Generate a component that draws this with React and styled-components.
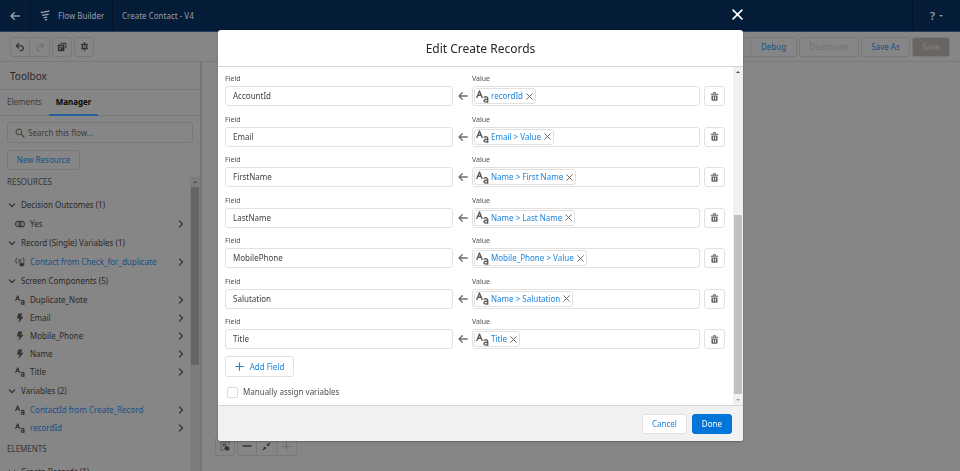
import React from "react";
import styled, { createGlobalStyle, css } from "styled-components";

const Global = createGlobalStyle`
  *, *::before, *::after { box-sizing: border-box; }
  html, body, #root { height: 100%; margin: 0; }
  body {
    overflow: hidden;
    font: 8px/12px "Noto Sans", "Open Sans", sans-serif;
    color: #2b2826;
    background: #868686;
  }
  button, input { font: inherit; color: inherit; margin: 0; padding: 0; }
  button { cursor: pointer; }
  h1, h2, h3, p, ul { margin: 0; padding: 0; font-weight: 400; }
  a { color: inherit; text-decoration: none; }
`;

const line = "#797979";
const dimBlue = "#175087";

const Page = styled.div`
  height: 100vh;
  display: flex;
  flex-direction: column;
  overflow: hidden;
`;

const TopBar = styled.header`
  display: flex;
  flex: none;
  height: 32px;
  background: #051c39;
  border-bottom: 1px solid #27405f;
  color: #979ea6;
`;

const topCell = css`
  display: flex;
  align-items: center;
  border: 0 solid #031329;
  border-right-width: 1px;
`;

const BackButton = styled.button`
  ${topCell}
  width: 31px;
  justify-content: center;
  background: none;
`;

const Brand = styled.div`
  ${topCell}
  width: 82px;
  padding-left: 9px;
  gap: 7px;
`;

const FlowName = styled.h1`
  flex: 1;
  align-self: center;
  padding-left: 9px;
  font-size: 8px;
  line-height: 12px;
`;

const HelpButton = styled.button`
  ${topCell}
  width: 48px;
  justify-content: center;
  gap: 4px;
  border-width: 0 0 0 1px;
  background: none;
  font-size: 11px;
  font-weight: 600;
`;

const Toolbar = styled.div`
  display: flex;
  flex: none;
  align-items: center;
  gap: 2px;
  height: 30px;
  padding: 0 10px;
  border-bottom: 1px solid ${line};
`;

const Spacer = styled.div`
  flex: 1;
`;

const ButtonGroup = styled.div`
  display: flex;
  button + button { border-left: 0; border-radius: 0 3px 3px 0; }
  button:not(:last-child) { border-top-right-radius: 0; border-bottom-right-radius: 0; }
  button:nth-child(2):not(:last-child) { border-radius: 0; }
`;

const DimButton = styled.button`
  display: flex;
  align-items: center;
  justify-content: center;
  height: 20px;
  width: ${(p) => p.$w || 20}px;
  border: 1px solid ${line};
  border-radius: 3px;
  background: ${(p) => (p.$filled ? "#686563" : "transparent")};
  color: ${(p) => p.$color || "#363433"};
`;

const Workspace = styled.main`
  display: flex;
  flex: 1;
  min-height: 0;
`;

const Sidebar = styled.aside`
  display: flex;
  flex: none;
  flex-direction: column;
  width: 201px;
  border-right: 1px solid #707070;
  box-shadow: 1px 0 1px #7a7a7a;
`;

const PanelTitle = styled.h2`
  flex: none;
  height: 28px;
  padding-left: 10px;
  border-bottom: 1px solid ${line};
  font-size: 10px;
  line-height: 29px;
`;

const Tabs = styled.div`
  display: flex;
  flex: none;
  height: 26px;
  border-bottom: 1px solid ${line};
`;

const Tab = styled.button`
  height: 26px;
  padding: 0 7px;
  border: 0;
  border-bottom: 2px solid ${(p) => (p.$active ? "#265f9f" : "transparent")};
  background: none;
  color: ${(p) => (p.$active ? "#080707" : "#3c3a39")};
  font-weight: ${(p) => (p.$active ? 700 : 400)};
`;

const SearchBox = styled.label`
  display: flex;
  flex: none;
  align-items: center;
  gap: 3px;
  height: 21px;
  margin: 6px 7px 0;
  padding: 0 7px;
  border: 1px solid ${line};
  border-radius: 3px;
  color: #4c4a49;
  input {
    flex: 1;
    min-width: 0;
    border: 0;
    outline: 0;
    background: none;
  }
  input::placeholder { color: #3f3d3c; opacity: 1; }
`;

const NewResource = styled(DimButton)`
  flex: none;
  margin: 7px 7px 0;
`;

const ResourceArea = styled.div`
  display: flex;
  flex: 1;
  min-height: 0;
`;

const ResourceList = styled.div`
  flex: 1;
  overflow: hidden;
`;

const Section = styled.h3`
  height: 25px;
  padding-left: 7px;
  font-size: 8px;
  line-height: 24px;
  color: #363433;
`;

const GroupToggle = styled.button`
  display: flex;
  align-items: center;
  gap: 5px;
  width: 100%;
  height: 20px;
  padding-left: 8px;
  border: 0;
  background: none;
`;

const Items = styled.ul`
  list-style: none;
`;

const Item = styled.li`
  a {
    display: grid;
    grid-template-columns: 10px 1fr 6px;
    align-items: center;
    gap: 5px;
    height: 18px;
    padding: 0 6px 0 15px;
    color: ${(p) => (p.$link ? dimBlue : "#2b2826")};
  }
  svg { color: #363433; }
`;

const Track = styled.div`
  display: flex;
  flex: none;
  flex-direction: column;
  align-items: center;
  width: 10px;
  background: ${(p) => (p.$light ? "#f1f1f1" : "#7d7d7d")};
  margin-top: ${(p) => (p.$light ? 0 : 7)}px;
`;

const Arrow = styled.i`
  width: 0;
  height: 0;
  flex: none;
  margin: ${(p) => (p.$down ? "5px 0 4px" : "4px 0 4px")};
  border: 2px solid transparent;
  border-${(p) => (p.$down ? "bottom" : "top")}-width: 0;
  border-${(p) => (p.$down ? "top" : "bottom")}: 2px solid ${(p) => p.$color};
`;

const SideThumb = styled.div`
  width: 8px;
  height: 178px;
  background: #656565;
`;

const Canvas = styled.section`
  display: flex;
  flex: 1;
  align-items: flex-end;
  gap: 2px;
  padding: 0 0 15px 14px;
`;

const Scrim = styled.div`
  position: fixed;
  inset: 0;
  padding: 30px 217px 30px 218px;
`;

const CloseButton = styled.button`
  position: absolute;
  top: 9px;
  right: 217px;
  display: flex;
  border: 0;
  background: none;
  color: #fff;
`;

const Dialog = styled.section`
  display: flex;
  flex-direction: column;
  height: 100%;
  overflow: hidden;
  border-radius: 3px;
  background: #fff;
  box-shadow: 0 1px 2px rgba(0, 0, 0, 0.25);
`;

const DialogTitle = styled.h2`
  flex: none;
  height: 37px;
  border-bottom: 1px solid #d6d5d5;
  font-size: 12px;
  line-height: 37px;
  text-align: center;
`;

const DialogBody = styled.div`
  display: flex;
  flex: 1;
  min-height: 0;
`;

const Form = styled.form`
  display: flex;
  flex: 1;
  flex-direction: column;
  padding: 7px 8px 7px 7px;
`;

const Assignments = styled.div`
  display: flex;
  flex: 1;
  flex-direction: column;
  justify-content: space-between;
`;

const Assignment = styled.div`
  display: grid;
  grid-template-columns: minmax(0, 1fr) 19px minmax(0, 1fr) 25px;
  align-items: end;
  color: #3e3e3c;
`;

const FieldLabel = styled.label`
  display: block;
  height: 12px;
  font-size: 7px;
  line-height: 10px;
  color: #514f4d;
`;

const frame = css`
  width: 100%;
  height: 20px;
  border: 1px solid #e3e1e0;
  border-radius: 3px;
  background: #fff;
`;

const TextField = styled.input`
  ${frame}
  padding: 0 7px 1px;
`;

const MapArrow = styled.div`
  display: flex;
  align-items: center;
  justify-content: center;
  height: 20px;
  color: #706e6b;
`;

const ValueBox = styled.div`
  ${frame}
  display: flex;
  align-items: center;
  padding-left: 1px;
  input {
    flex: 1;
    min-width: 0;
    border: 0;
    outline: 0;
    background: none;
  }
`;

const Pill = styled.span`
  display: flex;
  align-items: center;
  gap: 2px;
  height: 16px;
  padding: 0 2px 0 1px;
  border: 1px solid #e3e1e0;
  border-radius: 3px;
  color: #1b84dc;
  white-space: nowrap;
  svg { color: #5f5d5a; }
  button {
    display: flex;
    margin-left: 1px;
    border: 0;
    background: none;
  }
`;

const DeleteButton = styled.button`
  ${frame}
  width: 21px;
  margin-left: 4px;
  display: flex;
  align-items: center;
  justify-content: center;
  color: #666462;
`;

const AddField = styled.button`
  ${frame}
  display: flex;
  align-items: center;
  justify-content: center;
  gap: 6px;
  width: 69px;
  height: 21px;
  margin-top: 7px;
  color: #1b84dc;
`;

const Check = styled.label`
  display: flex;
  align-items: center;
  gap: 5px;
  margin: 9px 0 0 2px;
  color: #514f4d;
  input {
    appearance: none;
    width: 11px;
    height: 11px;
    border: 1px solid #dddbda;
    border-radius: 2px;
    background: #fff;
  }
`;

const BodyGap = styled.div`
  flex: 1;
`;

const BodyThumb = styled.div`
  width: 8px;
  height: 179px;
  background: #c1c1c1;
`;

const DialogFooter = styled.footer`
  display: flex;
  flex: none;
  align-items: center;
  justify-content: flex-end;
  gap: 5px;
  height: 36px;
  padding-right: 11px;
  border-top: 1px solid #d6d5d5;
  background: #f2f1f1;
`;

const FooterButton = styled.button`
  height: 20px;
  padding: 0 9px;
  border: 1px solid ${(p) => (p.$primary ? "#0176d8" : "#e3e1e0")};
  border-radius: 3px;
  background: ${(p) => (p.$primary ? "#0176d8" : "#fff")};
  color: ${(p) => (p.$primary ? "#fff" : "#1b84dc")};
`;

function Svg({ w = 10, h = w, box = "0 0 10 10", sw = 1, fill = "none", children }) {
  return (
    <svg
      width={w}
      height={h}
      viewBox={box}
      fill={fill}
      stroke={fill === "none" ? "currentColor" : "none"}
      strokeWidth={sw}
      strokeLinecap="round"
      strokeLinejoin="round"
      aria-hidden="true"
    >
      {children}
    </svg>
  );
}

const LeftArrow = ({ sw = 1.3 }) => (
  <Svg sw={sw}><path d="M9.2 5H1M4.3 1.7 1 5l3.3 3.3" /></Svg>
);
const Cross = ({ size = 7, sw = 1.3 }) => (
  <Svg w={size} sw={sw}><path d="m1 1 8 8M9 1 1 9" /></Svg>
);
const FlowLogo = () => (
  <Svg w={11} h={11} box="0 0 11 11" sw={1.3}>
    <path d="M1.2 2.2c1.6 1 3.4-.9 5-.7 1 .2 1.700.1 2.800-.6M2.600 5.100c1.300.700 2.500-.700 3.700-.600.700.100 1.200.100 1.900-.400M4 7.600c.9.500 1.700-.500 2.800-.500M5.300 9.900c.5.200.9-.100 1.300-.300" />
  </Svg>
);
const Undo = () => (
  <Svg sw={1.3}><path d="M3.6 1.5 1.3 3.8l2.3 2.3M1.5 3.8h4.3a2.3 2.3 0 0 1 0 4.8H5" /></Svg>
);
const Redo = () => (
  <Svg sw={1.3}><path d="m6.4 1.5 2.3 2.3-2.3 2.3M8.5 3.8H4.2a2.3 2.3 0 0 0 0 4.8H5" /></Svg>
);
const Copy = () => (
  <Svg fill="currentColor">
    <path d="M3.8.7h4.7c.5 0 .8.3.8.8v4.8h-1V1.7H3z" />
    <path fillRule="evenodd" d="M1.6 2.6h5c.5 0 .8.3.8.8v5c0 .5-.3.8-.8.8h-5c-.5 0-.8-.3-.8-.8v-5c0-.5.3-.8.8-.8zm.6 1.6v1h3.7v-1zm0 2v1.2H4V6.2z" />
  </Svg>
);
const Gear = () => (
  <Svg w={9} box="0 0 10 10" fill="currentColor">
    <path fillRule="evenodd" d="M4.3.4h1.4l.3 1.3.9.5 1.3-.4.8 1.3-1 1v1.8l1 1L8.2 8.2l-1.3-.4-.9.5-.3 1.3H4.3L4 8.3l-.9-.5-1.3.4L1 6.9l1-1V4.1l-1-1 .8-1.3 1.3.4.9-.5zM5 3.2a1.8 1.8 0 1 0 0 3.6 1.8 1.8 0 0 0 0-3.6zm0 1a.8.8 0 1 1 0 1.6.8.8 0 0 1 0-1.6z" />
  </Svg>
);
const Magnifier = () => (
  <Svg sw={1.2}><circle cx="3.9" cy="3.9" r="2.8" /><path d="m6 6 3 3" /></Svg>
);
const Chevron = ({ right }) =>
  right ? (
    <Svg w={6} h={8} box="0 0 6 8" sw={1.3}><path d="m1.4.9 3.1 3.1-3.1 3.1" /></Svg>
  ) : (
    <Svg w={8} h={6} box="0 0 8 6" sw={1.1}><path d="m1.3 1.9 2.7 2.7 2.7-2.7" /></Svg>
  );
const Bolt = () => (
  <Svg fill="currentColor"><path d="M3.4.5h4L6 3.7h2.7L3.4 9.7l1-4.2H1.8z" /></Svg>
);
const Outcomes = () => (
  <Svg sw={1.1}>
    <circle cx="3.4" cy="5" r="2.8" />
    <circle cx="6.6" cy="5" r="2.8" />
  </Svg>
);
const RecordVar = () => (
  <Svg sw={0.9}>
    <path d="M1.5 1.2C.5 3 .5 4.5 1.5 6.2M8.3 1.2c1 1.6 1 2.8.5 3.8M3.3 2.2 6 5.2M6.2 2.2 3.3 5.6" />
    <ellipse cx="6.8" cy="7" rx="1.9" ry=".7" fill="currentColor" />
    <path d="M4.9 7v1.2c0 1 3.8 1 3.8 0V7" fill="currentColor" />
  </Svg>
);
const TextIcon = ({ w = 10 }) => (
  <Svg w={w} box="0 0 12 12" sw={1.3}>
    <path d="M.8 6.9 3.2.9l2.4 6M1.6 4.9h3.2" />
    <path d="M7.6 6.6c1.4-.7 3.2-.4 3.2 1v3.7M10.8 8.6c-1.9-.2-3.4.2-3.4 1.4 0 1.6 2.8 1.5 3.4-.1" />
  </Svg>
);
const Trash = () => (
  <Svg w={9} fill="currentColor">
    <path fillRule="evenodd" d="M.8 2h2.4V1.3c0-.6.4-1 1-1h1.6c.6 0 1 .4 1 1V2h2.4v1.1H.8zm3.4 0h1.6v-.7H4.2zM1.6 3.8h6.8v4.9c0 .6-.4 1-1 1H2.6c-.6 0-1-.4-1-1zm1.8 1.1v3.4h.9V4.9zm2.3 0v3.4h.9V4.9z" />
  </Svg>
);
const Plus = ({ size = 9, sw = 1.3 }) => (
  <Svg w={size} sw={sw}><path d="M5 .8v8.4M.8 5h8.4" /></Svg>
);
const Minus = () => <Svg sw={1.3}><path d="M1 5h8" /></Svg>;
const Fit = () => (
  <Svg w={9} fill="currentColor">
    <path d="M5.6 4.4V1.3l1.1 1.1L8.6.5l.9.9-1.9 1.9 1.1 1.1zM4.4 5.6v3.1L3.3 7.6 1.4 9.5l-.9-.9 1.9-1.9-1.1-1.1z" />
  </Svg>
);
const SelectIcon = () => (
  <Svg fill="currentColor">
    <path d="M.5.5h1v1h-1zM2.5.5h1v1h-1zM4.5.5h1v1h-1zM6.5.5h1v1h-1zM8.5.5h1v1h-1zM.5 2.5h1v1h-1zM.5 4.5h1v1h-1zM.5 6.5h1v1h-1zM.5 8.5h1v1h-1zM2.5 8.5h1v1h-1zM8.5 2.5h1v1h-1zM2.8 2.8h3.7v.9H2.8zM2.8 4.5h1v1h-1z" />
    <path d="M5 4.2c.6 0 .8.4.8.8l3 .7c.6.2.8.5.7 1l-.5 2.8H5.6L4 7.6c.2-.6.7-.6 1-.3L4.5 5c0-.4.1-.7.5-.8z" />
  </Svg>
);

const icons = { outcome: Outcomes, record: RecordVar, text: TextIcon, bolt: Bolt };

const groups = [
  { title: "Decision Outcomes (1)", items: [["outcome", "Yes"]] },
  { title: "Record (Single) Variables (1)", items: [["record", "Contact from Check_for_duplicate", true]] },
  {
    title: "Screen Components (5)",
    items: [["text", "Duplicate_Note"], ["bolt", "Email"], ["bolt", "Mobile_Phone"], ["bolt", "Name"], ["text", "Title"]],
  },
  { title: "Variables (2)", items: [["text", "ContactId from Create_Record", true], ["text", "recordId", true]] },
];

const assignments = [
  ["AccountId", "recordId"],
  ["Email", "Email > Value"],
  ["FirstName", "Name > First Name"],
  ["LastName", "Name > Last Name"],
  ["MobilePhone", "Mobile_Phone > Value"],
  ["Salutation", "Name > Salutation"],
  ["Title", "Title"],
];

function ResourceGroup({ title, items }) {
  return (
    <>
      <GroupToggle><Chevron />{title}</GroupToggle>
      <Items>
        {items.map(([icon, name, link]) => {
          const Icon = icons[icon];
          return (
            <Item key={name} $link={link}>
              <a href="#resource"><Icon /><span>{name}</span><Chevron right /></a>
            </Item>
          );
        })}
      </Items>
    </>
  );
}

function AssignmentRow({ field, value }) {
  return (
    <Assignment>
      <div>
        <FieldLabel htmlFor={`field-${field}`}>Field</FieldLabel>
        <TextField id={`field-${field}`} defaultValue={field} />
      </div>
      <MapArrow><LeftArrow /></MapArrow>
      <div>
        <FieldLabel htmlFor={`value-${field}`}>Value</FieldLabel>
        <ValueBox>
          <Pill>
            <TextIcon w={13} />
            {value}
            <button type="button" aria-label={`Remove ${value}`}><Cross /></button>
          </Pill>
          <input id={`value-${field}`} />
        </ValueBox>
      </div>
      <DeleteButton type="button" aria-label={`Delete ${field}`}><Trash /></DeleteButton>
    </Assignment>
  );
}

export default function App() {
  return (
    <>
      <Global />
      <Page>
        <TopBar>
          <BackButton aria-label="Back"><LeftArrow sw={1.5} /></BackButton>
          <Brand><FlowLogo />Flow Builder</Brand>
          <FlowName>Create Contact - V4</FlowName>
          <HelpButton aria-label="Help">?<Arrow $down $color="#8f979f" /></HelpButton>
        </TopBar>
        <Toolbar>
          <ButtonGroup>
            <DimButton aria-label="Undo"><Undo /></DimButton>
            <DimButton aria-label="Redo" $color="#727272"><Redo /></DimButton>
          </ButtonGroup>
          <DimButton aria-label="Copy"><Copy /></DimButton>
          <DimButton aria-label="Settings"><Gear /></DimButton>
          <Spacer />
          <ButtonGroup>
            <DimButton $w={46} $color={dimBlue}>Run</DimButton>
            <DimButton $w={46} $color={dimBlue}>Debug</DimButton>
          </ButtonGroup>
          <DimButton $w={60} $color="#727272" disabled>Deactivate</DimButton>
          <DimButton $w={49} $color={dimBlue}>Save As</DimButton>
          <DimButton $w={38} $color="#858483" $filled disabled>Save</DimButton>
        </Toolbar>
        <Workspace>
          <Sidebar>
            <PanelTitle>Toolbox</PanelTitle>
            <Tabs role="tablist">
              <Tab role="tab">Elements</Tab>
              <Tab role="tab" $active aria-selected>Manager</Tab>
            </Tabs>
            <SearchBox>
              <Magnifier />
              <input type="search" placeholder="Search this flow..." aria-label="Search this flow" />
            </SearchBox>
            <NewResource $w={73} $color={dimBlue}>New Resource</NewResource>
            <ResourceArea>
              <ResourceList>
                <Section>RESOURCES</Section>
                {groups.map((g) => <ResourceGroup key={g.title} {...g} />)}
                <Section>ELEMENTS</Section>
                <ResourceGroup title="Create Records (1)" items={[]} />
              </ResourceList>
              <Track><Arrow $color="#4a4a4a" /><SideThumb /></Track>
            </ResourceArea>
          </Sidebar>
          <Canvas>
            <DimButton aria-label="Select elements"><SelectIcon /></DimButton>
            <ButtonGroup>
              <DimButton aria-label="Zoom out"><Minus /></DimButton>
              <DimButton aria-label="Zoom to fit"><Fit /></DimButton>
              <DimButton aria-label="Zoom in" $color="#6d6d6d"><Plus /></DimButton>
            </ButtonGroup>
          </Canvas>
        </Workspace>
      </Page>
      <Scrim>
        <CloseButton aria-label="Close"><Cross size={11} sw={1.5} /></CloseButton>
        <Dialog role="dialog" aria-modal="true" aria-labelledby="dialog-title">
          <DialogTitle id="dialog-title">Edit Create Records</DialogTitle>
          <DialogBody>
            <Form>
              <Assignments>
                {assignments.map(([field, value]) => (
                  <AssignmentRow key={field} field={field} value={value} />
                ))}
              </Assignments>
              <AddField type="button"><Plus />Add Field</AddField>
              <Check><input type="checkbox" />Manually assign variables</Check>
            </Form>
            <Track $light>
              <Arrow $color="#505050" />
              <BodyGap />
              <BodyThumb />
              <Arrow $down $color="#a0a0a0" />
            </Track>
          </DialogBody>
          <DialogFooter>
            <FooterButton>Cancel</FooterButton>
            <FooterButton $primary>Done</FooterButton>
          </DialogFooter>
        </Dialog>
      </Scrim>
    </>
  );
}
